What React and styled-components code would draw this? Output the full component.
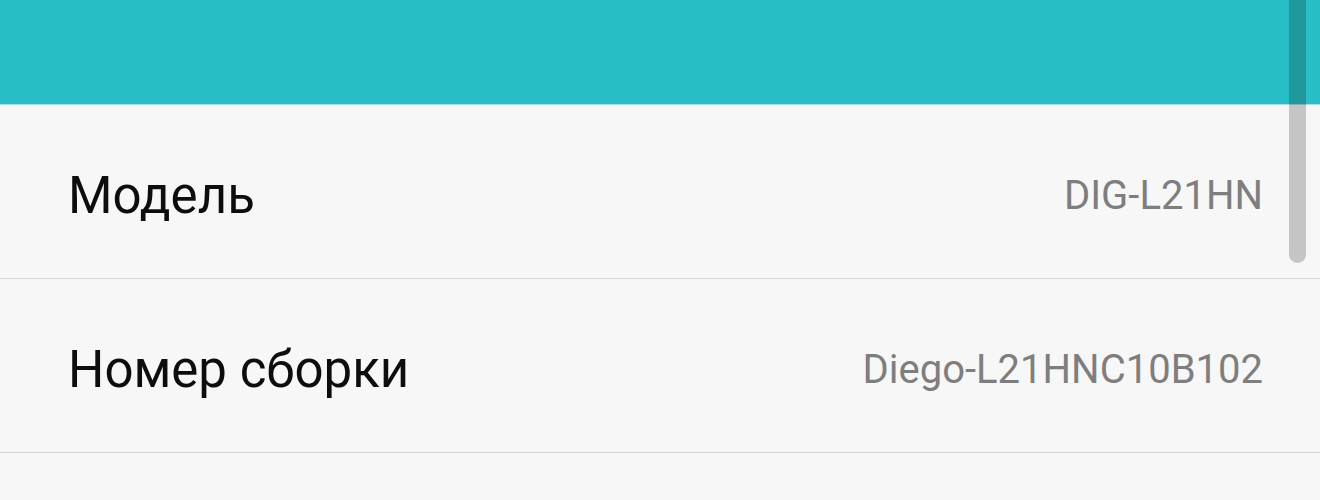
import React from "react";
import styled, { createGlobalStyle } from "styled-components";

const Global = createGlobalStyle`
  html, body { margin: 0; padding: 0; background: #f7f7f7; }
  body { font-family: Roboto, "Noto Sans", sans-serif; overflow: hidden; }
`;

const Screen = styled.div`
  position: relative;
  width: 1320px;
  height: 500px;
  background: #f7f7f7;
  overflow: hidden;
`;

const Header = styled.div`
  height: 104px;
  background: #28bec5;
  border-bottom: 1px solid #a6dfe2;
`;

const List = styled.div`
  display: flex;
  flex-direction: column;
`;

const Row = styled.div`
  height: 174px;
  display: flex;
  align-items: center;
  justify-content: space-between;
  padding: 7px 57px 0 68px;
  box-sizing: border-box;
  border-bottom: 1px solid #d8d8d8;
`;

const Label = styled.span`
  font-size: 51px;
  color: #0d0d0d;
`;

const Value = styled.span`
  font-size: 40px;
  color: #7e7e7e;
`;

const Scrollbar = styled.div`
  position: absolute;
  top: -10px;
  right: 14px;
  width: 17px;
  height: 273px;
  border-radius: 9px;
  background: rgba(0, 0, 0, 0.2);
`;

const rows = [
  { label: "Модель", value: "DIG-L21HN" },
  { label: "Номер сборки", value: "Diego-L21HNC10B102" },
];

export default function App() {
  return (
    <Screen>
      <Global />
      <Header />
      <List>
        {rows.map((r) => (
          <Row key={r.label}>
            <Label>{r.label}</Label>
            <Value>{r.value}</Value>
          </Row>
        ))}
      </List>
      <Scrollbar />
    </Screen>
  );
}
